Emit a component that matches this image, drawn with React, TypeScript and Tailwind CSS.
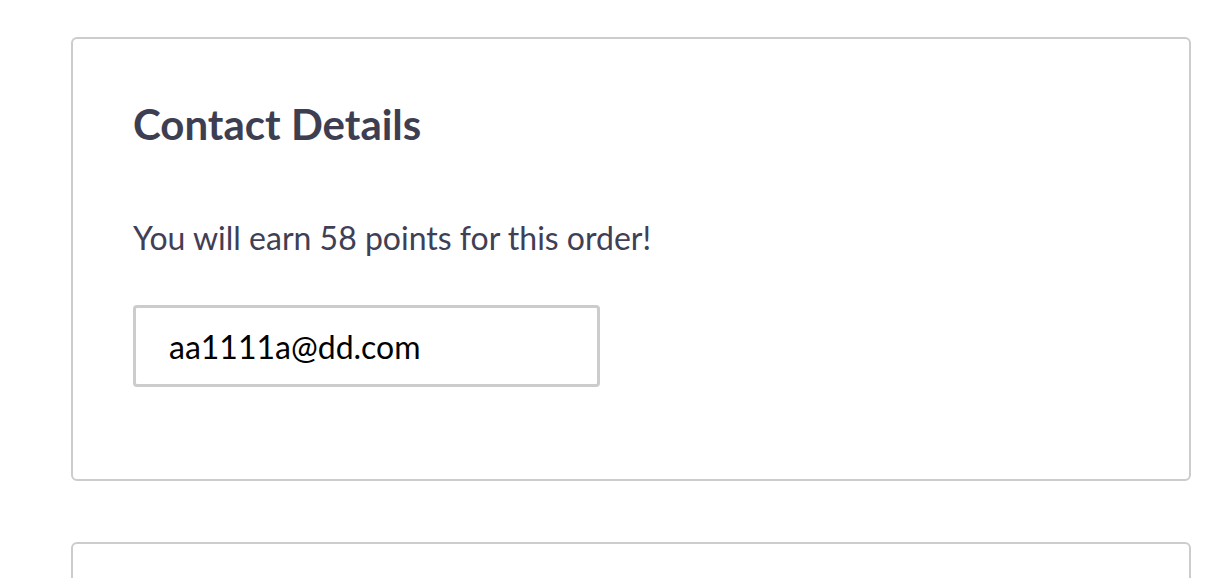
export default function App() {
  return (
    <div className="min-h-screen bg-white pl-[71px] pr-[19px] pt-[37px] font-['Lato','Noto_Sans',sans-serif]">
      <div className="rounded-md border-2 border-[#cccccc] px-[60px] pt-[60px] pb-[92px]">
        <h2 className="text-[42px] font-bold leading-[50px] text-[#3d3e52]">Contact Details</h2>
        <p className="mt-[67px] text-[32px] leading-[44px] text-[#3f4055]">
          You will earn 58 points for this order!
        </p>
        <input
          type="email"
          defaultValue="aa1111a@dd.com"
          className="mt-[45px] block h-[82px] w-[467px] rounded-[4px] border-[3px] border-[#cccccc] px-[33px] text-[32px] text-black outline-none font-['Lato',sans-serif]"
        />
      </div>
      <div className="mt-[61px] h-[60px] rounded-md border-2 border-[#cccccc]" />
    </div>
  );
}
